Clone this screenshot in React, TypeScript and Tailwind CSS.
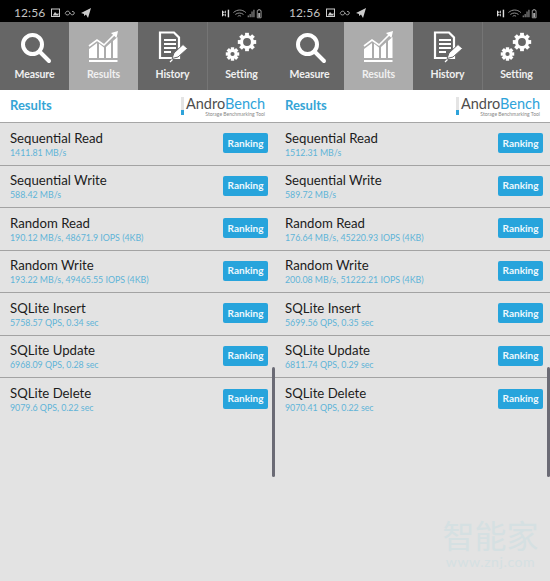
const rowsA: [string, string][] = [
  ["Sequential Read", "1411.81 MB/s"],
  ["Sequential Write", "588.42 MB/s"],
  ["Random Read", "190.12 MB/s, 48671.9 IOPS (4KB)"],
  ["Random Write", "193.22 MB/s, 49465.55 IOPS (4KB)"],
  ["SQLite Insert", "5758.57 QPS, 0.34 sec"],
  ["SQLite Update", "6968.09 QPS, 0.28 sec"],
  ["SQLite Delete", "9079.6 QPS, 0.22 sec"],
];
const rowsB: [string, string][] = [
  ["Sequential Read", "1512.31 MB/s"],
  ["Sequential Write", "589.72 MB/s"],
  ["Random Read", "176.64 MB/s, 45220.93 IOPS (4KB)"],
  ["Random Write", "200.08 MB/s, 51222.21 IOPS (4KB)"],
  ["SQLite Insert", "5699.56 QPS, 0.35 sec"],
  ["SQLite Update", "6811.74 QPS, 0.29 sec"],
  ["SQLite Delete", "9070.41 QPS, 0.22 sec"],
];

function Gear({ cx, cy, r, w }: { cx: number; cy: number; r: number; w: number }) {
  const teeth = [0, 45, 90, 135, 180, 225, 270, 315];
  return (
    <g>
      <circle cx={cx} cy={cy} r={r} fill="none" stroke="#fff" strokeWidth={w} />
      {teeth.map((a) => (
        <rect key={a} x={cx - w * 0.6} y={cy - r - w * 1.15} width={w * 1.2} height={w} fill="#fff" transform={`rotate(${a} ${cx} ${cy})`} />
      ))}
    </g>
  );
}

function NavIcon({ kind }: { kind: string }) {
  if (kind === "Measure")
    return (
      <svg width="34" height="34" viewBox="0 0 34 34">
        <circle cx="14.500" cy="13.500" r="9.500" fill="none" stroke="#fff" strokeWidth="4" />
        <path d="M22 21 L31 30" stroke="#fff" strokeWidth="4" strokeLinecap="round" />
      </svg>
    );
  if (kind === "Results")
    return (
      <svg width="34" height="34" viewBox="0 0 34 34">
        <path d="M2 15 L10 9 L17 14 L27 4" fill="none" stroke="#fff" strokeWidth="1.600" />
        <path d="M24 2 L31 0 L29.500 7 Z" fill="#fff" />
        <path d="M2 18 L10 12 V27 H2 Z M12 12.500 L17 16.500 V27 H12 Z M19 16 L24 11.500 V27 H19 Z M26 10 L30.500 6 V27 H26 Z" fill="#fff" />
        <rect x="2" y="29" width="28.500" height="2" fill="#fff" />
      </svg>
    );
  if (kind === "History")
    return (
      <svg width="34" height="34" viewBox="0 0 34 34">
        <path d="M4 1.500 H18 L23 6.500 V27 H4 Z" fill="none" stroke="#fff" strokeWidth="2.200" />
        <path d="M8 9 H20 M8 13 H20 M8 17 H20 M8 21 H15" stroke="#fff" strokeWidth="2" />
        <path d="M16 27.500 L18 22 L27 13.500 L31.500 17.500 L22 26 Z" fill="#fff" stroke="#666" strokeWidth="1" />
        <path d="M14 31 L16.500 28.500" stroke="#fff" strokeWidth="1.200" />
      </svg>
    );
  return (
    <svg width="34" height="34" viewBox="0 0 34 34">
      <Gear cx={22} cy={11} r={5.500} w={3.200} />
      <Gear cx={7.500} cy={23} r={3.500} w={2.800} />
    </svg>
  );
}

function Panel({ rows }: { rows: [string, string][] }) {
  return (
    <div className="relative w-[275px] shrink-0 h-full flex flex-col bg-[#e3e3e3]">
      <div className="h-[22px] bg-black text-[#c4c4c4] flex items-center pt-[4px] pl-[14px] pr-[12px] leading-none">
        <span className="mr-[6px] text-[12px] tracking-[0.1px]">12:56</span>
        <svg width="30" height="10" viewBox="0 0 30 10">
          <rect x="0.500" y="1" width="8" height="7.500" fill="none" stroke="#ccc" />
          <path d="M2 7 L4 4 L6 6 L7.500 5 V7.500 H2Z" fill="#ccc" />
          <path d="M15 4 C16.500 2.500 18 3 19 5 C20 7 21.500 7.500 23 6 C24 4.500 22.500 3 21 3.500 M19 5 C18 7 16.500 7.500 15 6.500 C14 5.500 14 5 15 4" fill="none" stroke="#aaa" strokeWidth="0.900" />
        </svg>
        <svg width="10" height="10" viewBox="0 0 10 10">
          <path d="M0 5 L10 0 L7 10 L5 6.500 L3 8 V6 Z" fill="#ccc" />
        </svg>
        <div className="ml-auto flex items-center">
          <svg width="41" height="11" viewBox="0 0 43 11">
            <path d="M0 2 V9 L4 5.500 Z M4 2 V9 L1 5.500 Z" fill="#ddd" />
            <rect x="6" y="1.500" width="1.500" height="8" fill="#ddd" />
            <path d="M12 4.500 C16 1 21 1 25 4.500 M14 6.500 C16.500 4.500 20 4.500 22.500 6.500 M16.500 8.500 C17.500 7.500 19 7.500 20 8.500" stroke="#999" strokeWidth="1" fill="none" />
            <path d="M27 9.500 H28 V7.500 H27Z M29 9.500 H30 V6 H29Z M31 9.500 H32 V3.500 H31Z M33 9.500 H34 V1.500 H33Z" fill="#aaa" />
            <path d="M37 2.500 H38 V1.500 H40 V2.500 H41 V10 H37Z" fill="none" stroke="#999" />
            <rect x="38" y="5" width="2" height="4.500" fill="#aaa" />
          </svg>
        </div>
      </div>
      <nav className="h-[68px] grid grid-cols-[69px_69px_69px_68px] bg-[#666666]">
        {["Measure", "Results", "History", "Setting"].map((n, i) => (
          <div
            key={n}
            className={`flex flex-col items-center pt-[9px] ${n === "Results" ? "bg-[#acacac]" : i === 3 ? "border-l border-[#757575]" : ""}`}
          >
            <NavIcon kind={n} />
            <span className="mt-[2px] text-[10.500px] leading-[14px] font-bold tracking-[-0.1px] text-[#f0f0f0]">{n}</span>
          </div>
        ))}
      </nav>
      <div className="h-[32px] bg-white flex items-center justify-between pl-[10px] pr-[10px]">
        <span className="text-[13px] font-bold text-[#35a5d6]">Results</span>
        <div className="flex items-start">
          <div className="w-[3px] h-[18px] mr-[2px] mt-[2px] flex flex-col justify-end bg-[#e4e4e4]">
            <div className="h-[5px] bg-[#2ea3da]" />
          </div>
          <div className="flex flex-col items-end">
            <span className="text-[14.500px] leading-[17px] text-[#4d4d4d]">
              Andro<span className="text-[#2ea3da]">Bench</span>
            </span>
            <span className="text-[5px] leading-[5px] text-[#888]">Storage Benchmarking Tool</span>
          </div>
        </div>
      </div>
      <div className="border-t border-[#a6a6a6]">
        {rows.map(([t, s], i) => (
          <div key={t} className={`h-[42.500px] box-border flex items-center justify-between pl-[10px] pr-[7px] ${i < rows.length - 1 ? "border-b border-[#a3a3a3]" : ""}`}>
            <div className="flex flex-col">
              <span className="text-[13.200px] leading-[16px] text-[#1c1c1c]">{t}</span>
              <span className="text-[8.800px] leading-[11px] mt-[1px] text-[#5fb4d8]">{s}</span>
            </div>
            <div className="w-[45px] h-[20px] mb-[1px] rounded-[2px] bg-[#27a4dc] flex items-center justify-center text-[10px] font-bold text-[#eef8fd]">
              Ranking
            </div>
          </div>
        ))}
      </div>
      <div className="absolute right-0 top-[367px] h-[110px] w-[3px] rounded-full bg-[#6b6b75]" />
    </div>
  );
}

export default function App() {
  return (
    <div className="relative w-[550px] h-[581px] overflow-hidden flex font-['Lato',sans-serif] bg-[#e3e3e3]">
      <Panel rows={rowsA} />
      <Panel rows={rowsB} />
      <div className="absolute left-[441px] top-[518px] w-[99px] flex flex-col items-center text-[#d5e0e2] leading-none">
        <span className="text-[32px] font-['Noto_Sans_CJK_SC',sans-serif] leading-[32px]">智能家</span>
        <span className="text-[14px] leading-[14px] mt-[5px] tracking-[0.6px]">www.znj.com</span>
      </div>
    </div>
  );
}
